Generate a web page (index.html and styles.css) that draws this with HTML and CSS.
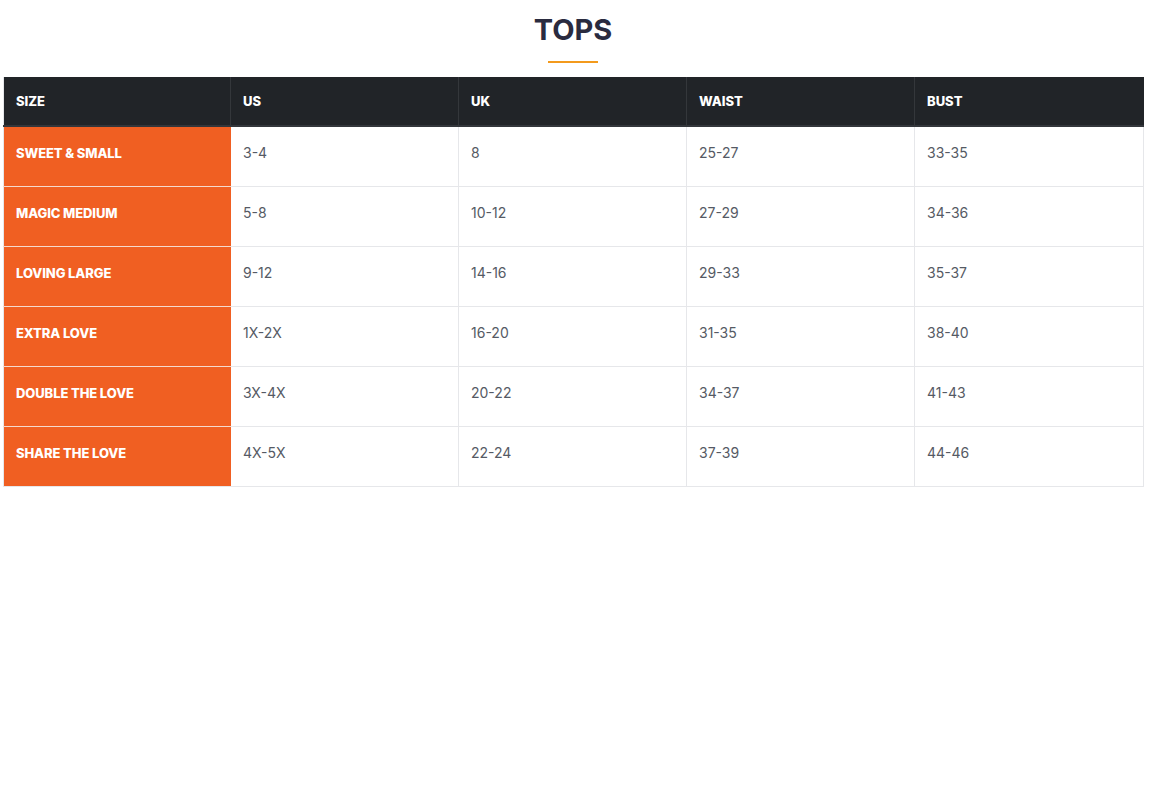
FILE: index.html
```html
<!DOCTYPE html>
<html>
<head>
<meta charset="utf-8">
<link rel="stylesheet" href="styles.css">
</head>
<body>
<div class="wrap">
  <h2 class="title">TOPS</h2>
  <div class="rule"></div>
  <table class="chart">
    <colgroup>
      <col class="c1"><col class="cn"><col class="cn"><col class="cn"><col class="cl">
    </colgroup>
    <thead>
      <tr><th>SIZE</th><th>US</th><th>UK</th><th>WAIST</th><th>BUST</th></tr>
    </thead>
    <tbody>
      <tr><td class="name">SWEET &amp; SMALL</td><td>3-4</td><td>8</td><td>25-27</td><td>33-35</td></tr>
      <tr><td class="name">MAGIC MEDIUM</td><td>5-8</td><td>10-12</td><td>27-29</td><td>34-36</td></tr>
      <tr><td class="name">LOVING LARGE</td><td>9-12</td><td>14-16</td><td>29-33</td><td>35-37</td></tr>
      <tr><td class="name">EXTRA LOVE</td><td>1X-2X</td><td>16-20</td><td>31-35</td><td>38-40</td></tr>
      <tr><td class="name">DOUBLE THE LOVE</td><td>3X-4X</td><td>20-22</td><td>34-37</td><td>41-43</td></tr>
      <tr><td class="name">SHARE THE LOVE</td><td>4X-5X</td><td>22-24</td><td>37-39</td><td>44-46</td></tr>
    </tbody>
  </table>
</div>
</body>
</html>
```
FILE: styles.css
```css
html, body {
  margin: 0;
  padding: 0;
  background: #fff;
}
body {
  font-family: "Inter", "Liberation Sans", sans-serif;
}
.wrap {
  width: 1140px;
  margin-left: 3px;
  padding-top: 12px;
}
.title {
  margin: 0;
  text-align: center;
  font-size: 29px;
  line-height: 36px;
  font-weight: 700;
  color: #2a2b3f;
}
.rule {
  width: 50px;
  height: 2px;
  background: #f39a1c;
  margin: 13px auto 14px;
}
.chart {
  width: 1140px;
  border-collapse: collapse;
  table-layout: fixed;
}
.chart .c1 { width: 227px; }
.chart .cn { width: 228px; }
.chart .cl { width: 229px; }
.chart th {
  background: #212428;
  color: #fff;
  text-align: left;
  font-size: 13px;
  font-weight: 800;
  height: 48px;
  padding: 0 12px;
  border-left: 1px solid #34373b;
  border-bottom: 2px solid #33363b;
}
.chart th:first-child {
  border-left: 1px solid #e6e7ea;
}
.chart td {
  height: 47px;
  padding: 2px 12px 10px;
  font-size: 14px;
  color: #555a64;
  border: 1px solid #e6e7ea;
  vertical-align: middle;
}
.chart td.name {
  background: #f05f22;
  color: #fff;
  font-weight: 800;
  font-size: 13px;
  letter-spacing: -0.1px;
  border-left-color: #e6e7ea;
  border-right-color: #f05f22;
  border-top: 1px solid #f5d9cd;
  border-bottom: 1px solid #f5d9cd;
}
.chart tbody tr:first-child td.name {
  border-top-color: #f05f22;
}
.chart tbody tr:last-child td.name {
  border-bottom-color: #e6e7ea;
}
```
